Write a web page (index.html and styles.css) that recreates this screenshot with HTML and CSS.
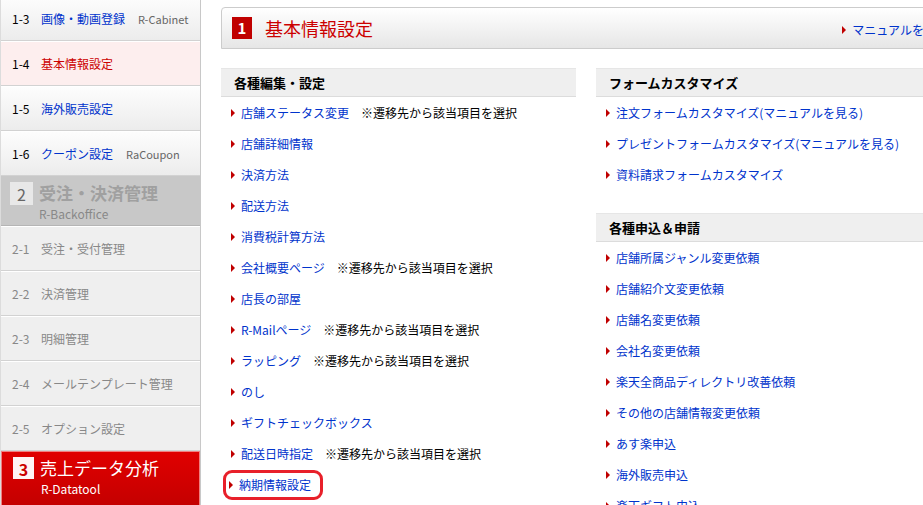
FILE: index.html
```html
<!DOCTYPE html>
<html lang="ja">
<head>
    <meta charset="UTF-8">
    <title>店舗設定 - 基本情報設定</title>
    <link rel="stylesheet" href="styles.css">
</head>
<body>

    <div class="side-menu">
        <!-- 1 店舗設定 -->
        <div class="menu-item first"><span class="num">1-3</span><a href="#">画像・動画登録</a><span class="sub">R-Cabinet</span></div>
        <div class="menu-item current"><span class="num">1-4</span><a href="#">基本情報設定</a></div>
        <div class="menu-item"><span class="num">1-5</span><a href="#">海外販売設定</a></div>
        <div class="menu-item"><span class="num">1-6</span><a href="#">クーポン設定</a><span class="sub">RaCoupon</span></div>

        <!-- 2 受注・決済管理 -->
        <div class="menu-group disabled">
            <div class="group-title"><span class="group-num">2</span>受注・決済管理</div>
            <div class="group-sub">R-Backoffice</div>
        </div>
        <div class="menu-item off"><span class="num">2-1</span><span>受注・受付管理</span></div>
        <div class="menu-item off"><span class="num">2-2</span><span>決済管理</span></div>
        <div class="menu-item off"><span class="num">2-3</span><span>明細管理</span></div>
        <div class="menu-item off"><span class="num">2-4</span><span>メールテンプレート管理</span></div>
        <div class="menu-item off"><span class="num">2-5</span><span>オプション設定</span></div>

        <!-- 3 売上データ分析 -->
        <div class="menu-group active">
            <div class="group-title"><span class="group-num">3</span>売上データ分析</div>
            <div class="group-sub">R-Datatool</div>
        </div>
    </div>

    <div class="main">
        <div class="page-head">
            <h1><span class="page-num">1</span>基本情報設定</h1>
            <a class="manual arrow" href="#">マニュアルを見る</a>
        </div>

        <div class="columns">
            <div class="col">
                <h2 class="box-title">各種編集・設定</h2>
                <ul class="links">
                    <li><a class="arrow" href="#">店舗ステータス変更</a><span class="note">※遷移先から該当項目を選択</span></li>
                    <li><a class="arrow" href="#">店舗詳細情報</a></li>
                    <li><a class="arrow" href="#">決済方法</a></li>
                    <li><a class="arrow" href="#">配送方法</a></li>
                    <li><a class="arrow" href="#">消費税計算方法</a></li>
                    <li><a class="arrow" href="#">会社概要ページ</a><span class="note">※遷移先から該当項目を選択</span></li>
                    <li><a class="arrow" href="#">店長の部屋</a></li>
                    <li><a class="arrow" href="#">R-Mailページ</a><span class="note">※遷移先から該当項目を選択</span></li>
                    <li><a class="arrow" href="#">ラッピング</a><span class="note">※遷移先から該当項目を選択</span></li>
                    <li><a class="arrow" href="#">のし</a></li>
                    <li><a class="arrow" href="#">ギフトチェックボックス</a></li>
                    <li><a class="arrow" href="#">配送日時指定</a><span class="note">※遷移先から該当項目を選択</span></li>
                    <li><span class="marked"><a class="arrow" href="#">納期情報設定</a></span></li>
                </ul>
            </div>

            <div class="col">
                <h2 class="box-title">フォームカスタマイズ</h2>
                <ul class="links">
                    <li><a class="arrow" href="#">注文フォームカスタマイズ(マニュアルを見る)</a></li>
                    <li><a class="arrow" href="#">プレゼントフォームカスタマイズ(マニュアルを見る)</a></li>
                    <li><a class="arrow" href="#">資料請求フォームカスタマイズ</a></li>
                </ul>

                <h2 class="box-title spaced">各種申込＆申請</h2>
                <ul class="links">
                    <li><a class="arrow" href="#">店舗所属ジャンル変更依頼</a></li>
                    <li><a class="arrow" href="#">店舗紹介文変更依頼</a></li>
                    <li><a class="arrow" href="#">店舗名変更依頼</a></li>
                    <li><a class="arrow" href="#">会社名変更依頼</a></li>
                    <li><a class="arrow" href="#">楽天全商品ディレクトリ改善依頼</a></li>
                    <li><a class="arrow" href="#">その他の店舗情報変更依頼</a></li>
                    <li><a class="arrow" href="#">あす楽申込</a></li>
                    <li><a class="arrow" href="#">海外販売申込</a></li>
                    <li><a class="arrow" href="#">楽天ギフト申込</a></li>
                </ul>
            </div>
        </div>
    </div>

</body>
</html>
```

FILE: styles.css
```css
body {
    margin: 0;
    font-family: "Noto Sans CJK JP", "Liberation Sans", sans-serif;
    font-size: 12px;
    color: #000;
    background: #fff;
    display: flex;
    align-items: flex-start;
    height: 505px;
    overflow: hidden;
}
a { color: #0033cc; text-decoration: none; }

/* side menu */
.side-menu {
    width: 199px;
    flex-shrink: 0;
    margin-top: -4px;
    border-left: 1px solid #dcdcdc;
    border-right: 1px solid #c8c8c8;
}
.menu-item {
    height: 43px;
    display: flex;
    align-items: center;
    padding-left: 11px;
    border-top: 1px solid #fff;
    border-bottom: 1px solid #d2d2d2;
    background: linear-gradient(#fdfdfd, #ececec);
    white-space: nowrap;
}
.menu-item .num { width: 29px; }
.menu-item .sub { margin-left: 13px; color: #666; font-size: 11px; }
.menu-item.current { background: #fdeeee; }
.menu-item.current a { color: #cc0000; }
.menu-item.off { background: #efefef; color: #888; }

.menu-group {
    height: 50px;
    padding: 5px 0 0 9px;
    box-sizing: border-box;
}
.group-title {
    display: flex;
    align-items: center;
    font-size: 17px;
    line-height: 24px;
    font-weight: bold;
}
.group-num {
    width: 23px;
    height: 23px;
    margin-right: 6px;
    text-align: center;
    font-size: 16px;
    font-weight: normal;
}
.group-sub { margin: 0 0 0 29px; font-size: 12px; }
.menu-group.disabled { background: #c8c8c8; color: #a0a0a0; border-bottom: 1px solid #b5b5b5; }
.menu-group.disabled .group-num { background: #e8e8e8; color: #666; }
.menu-group.disabled .group-sub { color: #888; }
.menu-group.active {
    height: 60px;
    padding: 4px 0 0 11px;
    background: linear-gradient(#e00000, #c20000);
    border: 1px solid #f08080;
    color: #fff;
}
.menu-group.active .group-title { font-weight: normal; }
.menu-group.active .group-num { background: #fff4f4; color: #cc0000; font-weight: bold; width: 21px; height: 22px; }
.menu-group.active .group-sub { margin-left: 28px; }

/* main */
.main {
    width: 730px;
    flex-shrink: 0;
    margin: 7px 0 0 20px;
}
.page-head {
    height: 40px;
    display: flex;
    align-items: center;
    justify-content: space-between;
    padding: 0 2px 0 10px;
    border: 1px solid #cccccc;
    border-radius: 4px 0 0 0;
    background: linear-gradient(#ffffff, #e6e6e6);
}
.page-head h1 {
    margin: 0;
    display: flex;
    align-items: center;
    font-size: 18px;
    font-weight: normal;
    color: #cc0000;
}
.page-num {
    width: 20px;
    height: 22px;
    margin-right: 13px;
    background: #c00000;
    color: #fff;
    font-size: 15px;
    font-weight: bold;
    line-height: 22px;
    text-align: center;
}
.manual { margin-top: 2px; }

.columns {
    display: flex;
    gap: 20px;
    margin-top: 19px;
}
.col { width: 355px; }
.box-title {
    margin: 0;
    height: 27px;
    padding-left: 13px;
    line-height: 27px;
    font-size: 13px;
    background: #efefef;
    border-top: 1px solid #e6e6e6;
    border-bottom: 1px solid #dcdcdc;
}
.box-title.spaced { margin-top: 23px; }
.links {
    list-style: none;
    margin: 0;
    padding: 0 0 0 10px;
}
.links li {
    height: 31px;
    display: flex;
    align-items: center;
    white-space: nowrap;
}
.arrow::before {
    content: "";
    display: inline-block;
    margin-right: 6px;
    vertical-align: 1px;
    border-left: 4px solid #c00000;
    border-top: 4px solid transparent;
    border-bottom: 4px solid transparent;
}
.note { margin-left: 12px; }

/* red highlight drawn around one item */
.marked {
    margin-left: -8px;
    padding: 0 9px 0 3px;
    height: 24px;
    line-height: 24px;
    border: 3px solid #e8202a;
    border-radius: 9px;
}
```
